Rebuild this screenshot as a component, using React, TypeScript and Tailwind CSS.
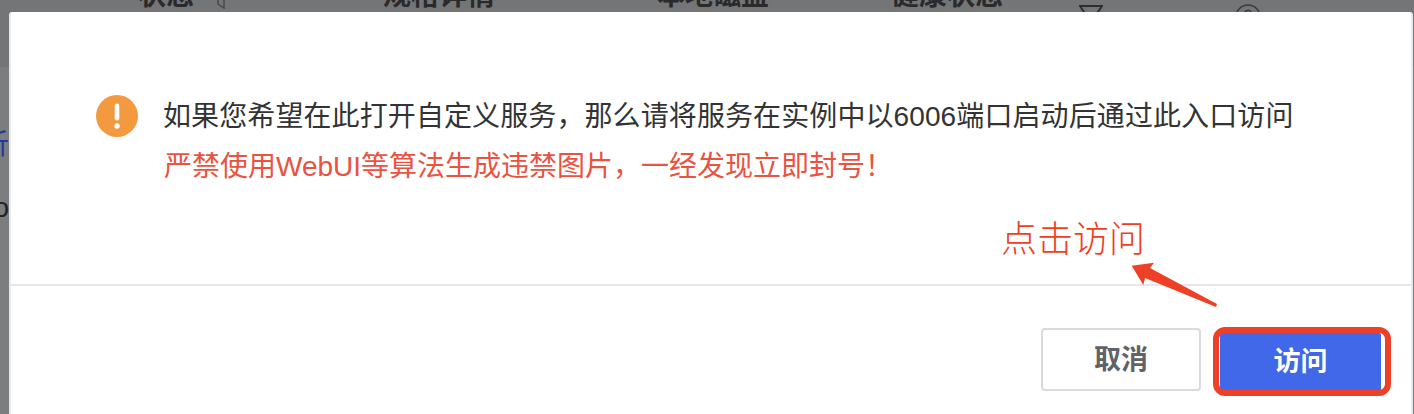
export default function App() {
  return (
    <div className="relative h-[414px] w-[1414px] overflow-hidden bg-[#7c7d7f] font-['Liberation_Sans','Noto_Sans_CJK_SC',sans-serif]">
      {/* page behind the dialog */}
      <div className="-mt-[18px] flex h-[85px] items-start bg-[#747577] text-[28px] leading-[28px] font-bold text-[#2a2a2b]">
        <span className="ml-[138px] w-[79px]">状态</span>
        <svg className="mt-[13px] h-[14px] w-[10px]" viewBox="0 0 10 14" fill="none" stroke="#4a4a4c" strokeWidth="1.5"><path d="M1 1v8l6 4V3z" /></svg>
        <span className="ml-[156px] w-[279px]">规格详情</span>
        <span className="-ml-[5px] w-[234px]">本地磁盘</span>
        <span className="w-[188px]">健康状态</span>
        <svg className="mt-[23px] h-[16px] w-[24px]" viewBox="0 0 24 16" fill="none" stroke="#2e2e30" strokeWidth="2"><path d="M1 1h22l-8 12v3H9v-3z" /></svg>
        <svg className="ml-[132px] mt-[22px] h-[26px] w-[26px]" viewBox="0 0 26 26" fill="none" stroke="#3a3a3c" strokeWidth="1.5"><circle cx="13" cy="13" r="12" /><path d="M9.5 10a3.5 3.5 0 1 1 5 3c-1 .6-1.5 1.2-1.5 2.5" /></svg>
      </div>
      <div className="mt-[63px] flex h-[30px] w-[9px] justify-end overflow-hidden text-[28px] leading-[30px] text-[#1f3a9e]">
        <span className="shrink-0">析</span>
      </div>
      <div className="mt-[33px] flex h-[30px] w-[9px] justify-end overflow-hidden text-[28px] leading-[30px] text-[#222]">
        <span className="shrink-0">o</span>
      </div>

      {/* dialog */}
      <div className="absolute top-3 right-[1px] bottom-0 left-[9px] flex flex-col rounded-t-[3px] border-x-2 border-[#e8e8ef] bg-white">
        <div className="flex h-[272px] items-start gap-[25px] pt-[83px] pl-[85px]">
          <svg className="h-[42px] w-[42px] shrink-0" viewBox="0 0 42 42">
            <circle cx="21" cy="21" r="21" fill="#f39a40" />
            <rect x="18.7" y="8.5" width="4.6" height="17" rx="2.3" fill="#fff" />
            <circle cx="21" cy="31" r="2.7" fill="#fff" />
          </svg>
          <div className="-mt-[3px] text-[28px] leading-[50px] font-normal">
            <p className="whitespace-nowrap tracking-[0.1px] text-[#333333]">如果您希望在此打开自定义服务，那么请将服务在实例中以6006端口启动后通过此入口访问</p>
            <p className="ml-px whitespace-nowrap text-[#e9533f]">严禁使用WebUI等算法生成违禁图片，一经发现立即封号！</p>
          </div>
        </div>
        <div className="h-[2px] bg-[#e6e6ec]" />
        <div className="flex items-start justify-end gap-[19px] pt-[42px] pr-[30px]">
          <button className="h-[63px] w-[160px] rounded-[4px] border-2 border-[#d9d9de] bg-white pt-[2px] text-[27px] font-bold text-[#606266]">取消</button>
          <div className="relative mt-[5px]">
            <button className="h-[58px] w-[161px] rounded-[2px] bg-[#4168e8] text-[27px] font-bold text-white">访问</button>
            <span className="absolute -top-[6px] -right-[10px] -bottom-[5px] -left-[7px] rounded-[12px] border-[6px] border-[#ee4027]" />
          </div>
        </div>
      </div>

      {/* annotation */}
      <span className="absolute top-[215px] left-[1001px] text-[36px] leading-[50px] font-light whitespace-nowrap text-[#ee3f22]">点击访问</span>
      <svg className="absolute top-[258px] left-[1125px] h-[54px] w-[98px]" viewBox="0 0 98 54">
        <path d="M6.7 7.7 L29 4.7 L25 10 L92 46 L91 49 L20 20 L18.3 27 Z" fill="#ee4027" />
      </svg>
    </div>
  );
}
